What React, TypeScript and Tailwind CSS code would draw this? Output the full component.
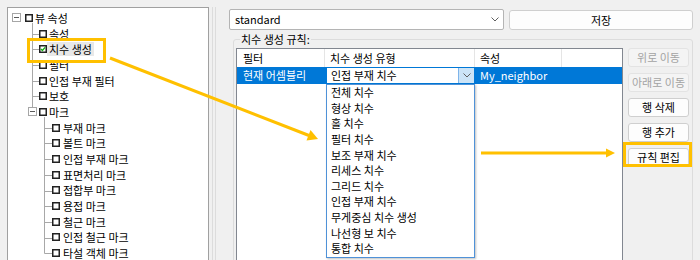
import React from "react";

type Node = { label: string; level: 0 | 1 | 2; exp?: boolean; checked?: boolean; sel?: boolean };

const tree: Node[] = [
  { label: "뷰 속성", level: 0, exp: true },
  { label: "속성", level: 1 },
  { label: "치수 생성", level: 1, checked: true, sel: true },
  { label: "필터", level: 1 },
  { label: "인접 부재 필터", level: 1 },
  { label: "보호", level: 1 },
  { label: "마크", level: 1, exp: true },
  { label: "부재 마크", level: 2 },
  { label: "볼트 마크", level: 2 },
  { label: "인접 부재 마크", level: 2 },
  { label: "표면처리 마크", level: 2 },
  { label: "접합부 마크", level: 2 },
  { label: "용접 마크", level: 2 },
  { label: "철근 마크", level: 2 },
  { label: "인접 철근 마크", level: 2 },
  { label: "타설 객체 마크", level: 2 },
];

const dimTypes = [
  "전체 치수",
  "형상 치수",
  "홀 치수",
  "필터 치수",
  "보조 부재 치수",
  "리세스 치수",
  "그리드 치수",
  "인접 부재 치수",
  "무게중심 치수 생성",
  "나선형 보 치수",
  "통합 치수",
];

const ROW = 15.7;

function Check({ on }: { on?: boolean }) {
  return (
    <svg width="8" height="8" viewBox="0 0 8 8" className="shrink-0">
      <rect x="0.75" y="0.75" width="6.5" height="6.5" fill="#fff" stroke="#222" strokeWidth="1.5" />
      {on && <polyline points="2,4.1 3.4,5.5 6.1,2.4" fill="none" stroke="#10b010" strokeWidth="1.4" />}
    </svg>
  );
}

function Expander() {
  return (
    <span className="w-[9px] h-[9px] shrink-0 border border-[#a6a6a6] bg-white flex items-center justify-center">
      <span className="w-[5px] h-px bg-[#5a5a5a]" />
    </span>
  );
}

function Chevron({ color = "#606060" }: { color?: string }) {
  return (
    <svg width="8" height="5" viewBox="0 0 8 5">
      <polyline points="0.5,0.5 4,4 7.5,0.5" fill="none" stroke={color} strokeWidth="1" />
    </svg>
  );
}

function TreeRow({ n }: { n: Node }) {
  const text = (
    <span className={`px-[2px] leading-[14px] ${n.sel ? "bg-[#e8e8e8]" : ""}`}>{n.label}</span>
  );
  return (
    <div className="flex items-center h-[15.7px]">
      {n.level === 0 && (
        <>
          <span className="w-[4px] shrink-0" />
          <Expander />
          <span className="w-[4px] shrink-0" />
          <Check />
          {text}
        </>
      )}
      {n.level === 1 && n.exp && (
        <>
          <span className="w-[20px] shrink-0" />
          <Expander />
          <span className="w-[2px] shrink-0" />
          <Check on={n.checked} />
          {text}
        </>
      )}
      {n.level === 1 && !n.exp && (
        <>
          <span className="w-[31px] shrink-0" />
          <Check on={n.checked} />
          {text}
        </>
      )}
      {n.level === 2 && (
        <>
          <span className="w-[44px] shrink-0" />
          <Check />
          <span className="w-[1px] shrink-0" />
          {text}
        </>
      )}
    </div>
  );
}

function TreeLines() {
  const c = (i: number) => 9.85 + ROW * i;
  const lvl1 = [1, 2, 3, 4, 5];
  const lvl2 = [7, 8, 9, 10, 11, 12, 13, 14, 15];
  return (
    <svg className="absolute left-0 top-0 pointer-events-none" width="200" height="270">
      <g stroke="#a8a8a8" strokeWidth="1">
        <line x1="24.5" y1={c(0) + 5} x2="24.5" y2={c(6) - 5} />
        {lvl1.map((i) => (
          <line key={i} x1="24.5" y1={Math.round(c(i)) + 0.5} x2="31" y2={Math.round(c(i)) + 0.5} />
        ))}
        <line x1="36.5" y1={c(6) + 5} x2="36.5" y2={Math.round(c(15)) + 0.5} />
        {lvl2.map((i) => (
          <line key={i} x1="36.5" y1={Math.round(c(i)) + 0.5} x2="44" y2={Math.round(c(i)) + 0.5} />
        ))}
      </g>
    </svg>
  );
}

function SideButton({ label, disabled }: { label: string; disabled?: boolean }) {
  return (
    <div
      className={`h-[19px] flex items-center justify-center rounded-[3px] border ${
        disabled ? "border-[#e3e3e3] bg-[#f4f4f4] text-[#a3a3a3]" : "border-[#cfcfcf] bg-[#fdfdfd] text-black"
      }`}
    >
      {label}
    </div>
  );
}

export default function App() {
  return (
    <div className="relative w-[700px] h-[260px] overflow-hidden bg-[#f0f0f0] flex font-['Noto_Sans_CJK_KR',sans-serif] text-[11px] text-black leading-none">
      {/* left: tree */}
      <div className="flex shrink-0 pl-[7px] pt-[7px]">
        <div className="relative w-[202px] h-[270px] border border-[#a0a0a0] bg-white pt-[2px]">
          <TreeLines />
          {tree.map((n) => (
            <TreeRow key={n.label} n={n} />
          ))}
        </div>
        <div className="ml-[3px] w-[4px] h-[270px] border-x border-[#dcdcdc]" />
      </div>

      {/* right */}
      <div className="flex-1 pl-[13px] pr-[7px] pt-[9px] flex flex-col">
        <div className="flex gap-[5px]">
          <div className="w-[275px] h-[21px] rounded-[2px] border border-[#b4b4b4] bg-white flex items-center justify-between pl-[5px] pr-[4px]">
            <span>standard</span>
            <Chevron />
          </div>
          <div className="flex-1 h-[20px] mt-px rounded-[3px] border border-[#cfcfcf] bg-[#fdfdfd] flex items-center justify-center">
            저장
          </div>
        </div>

        <fieldset className="mt-[2px] ml-[4px] h-[240px] border border-[#dcdcdc] rounded-[3px] pl-[2px]">
          <legend className="ml-[4px] px-[1px] h-[15px] leading-[15px]">치수 생성 규칙:</legend>
          <div className="flex mt-px">
            <div className="w-[387px] h-[220px] border border-[#828790] bg-white">
              <div className="flex h-[18px] items-center">
                <div className="w-[88px] h-full border-r border-[#e5e5e5] pl-[6px] flex items-center">필터</div>
                <div className="w-[150px] h-full border-r border-[#e5e5e5] pl-[5px] flex items-center">치수 생성 유형</div>
                <div className="w-[87px] h-full border-r border-[#e5e5e5] pl-[5px] flex items-center">속성</div>
                <div className="flex-1" />
              </div>
              <div className="flex h-[17px] bg-[#0078d7] text-white">
                <div className="w-[88px] pl-[6px] flex items-center">현재 어셈블리</div>
                <div className="relative w-[150px] pl-px">
                  <div className="h-full bg-white border border-[#0078d7] text-black flex items-center">
                    <span className="flex-1 pl-[4px]">인접 부재 치수</span>
                    <span className="w-[16px] h-full bg-[#cce4f7] border-l border-[#7eb4ea] flex items-center justify-center">
                      <Chevron />
                    </span>
                  </div>
                  <div className="absolute left-px top-full w-[149px] border border-[#4f92d8] bg-white text-black shadow-[1px_1px_2px_rgba(0,0,0,0.25)] z-10">
                    {dimTypes.map((t) => (
                      <div key={t} className="h-[15.6px] pl-[4px] flex items-center">
                        {t}
                      </div>
                    ))}
                  </div>
                </div>
                <div className="w-[87px] pl-[5px] flex items-center">My_neighbor</div>
              </div>
            </div>
            <div className="ml-[5px] w-[61px] flex flex-col gap-[6px]">
              <SideButton label="위로 이동" disabled />
              <SideButton label="아래로 이동" disabled />
              <SideButton label="행 삭제" />
              <SideButton label="행 추가" />
              <SideButton label="규칙 편집" />
            </div>
          </div>
        </fieldset>
      </div>

      {/* annotation overlay */}
      <svg className="absolute inset-0 pointer-events-none z-20" width="700" height="260">
        <g fill="none" stroke="#ffc000" strokeWidth="3">
          <rect x="28.5" y="39.5" width="76" height="22" />
          <rect x="624.5" y="143.5" width="66" height="22" />
          <line x1="110" y1="58" x2="309" y2="135.5" />
          <line x1="481" y1="153" x2="607" y2="153" />
        </g>
        <g fill="#ffc000">
          <polygon points="318,139 306.5,140.5 310.5,130" />
          <polygon points="615,153 606,148.5 606,157.5" />
        </g>
      </svg>
    </div>
  );
}
